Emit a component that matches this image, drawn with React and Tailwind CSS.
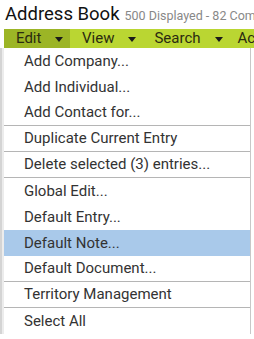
import React from "react";

const items = [
  { label: "Add Company..." },
  { label: "Add Individual..." },
  { label: "Add Contact for...", sep: true },
  { label: "Duplicate Current Entry", sep: true },
  { label: "Delete selected (3) entries...", sep: true },
  { label: "Global Edit..." },
  { label: "Default Entry..." },
  { label: "Default Note...", active: true },
  { label: "Default Document...", sep: true },
  { label: "Territory Management", sep: true },
  { label: "Select All" },
];

function Caret() {
  return (
    <svg width="8" height="5" viewBox="0 0 8 5" className="shrink-0">
      <path d="M0 0h8L4 5z" fill="#1a1a1a" />
    </svg>
  );
}

export default function App() {
  return (
    <div className="w-[254px] h-[339px] overflow-hidden bg-white font-['Roboto',sans-serif] text-[#333]">
      <div className="flex items-baseline whitespace-nowrap pl-[5px] pt-[3px] h-[29px]">
        <span className="shrink-0 text-[18.5px] leading-[23px] text-[#111]">Address Book</span>
        <span className="shrink-0 ml-[5px] text-[12.5px] text-[#888]">500 Displayed - 82 Companies</span>
      </div>
      <div className="ml-[4px] flex h-[19px] items-center whitespace-nowrap bg-[#bad632] text-[15px] text-[#2b2b10]">
        <div className="flex h-full w-[66px] shrink-0 items-center bg-[#9cb526] pl-[12px]">
          <span>Edit</span>
          <span className="ml-[14px] mt-[2px]"><Caret /></span>
        </div>
        <div className="flex h-full shrink-0 items-center pl-[12px]">
          <span>View</span>
          <span className="ml-[14px] mt-[2px]"><Caret /></span>
        </div>
        <div className="flex h-full shrink-0 items-center pl-[18px]">
          <span>Search</span>
          <span className="ml-[14px] mt-[2px]"><Caret /></span>
        </div>
        <div className="flex h-full shrink-0 items-center pl-[15px]">
          <span>Actions</span>
        </div>
      </div>
      <div className="flex">
        <div className="w-[4px] shrink-0 flex">
          <div className="w-[2px] bg-[#d4d4d4]" />
          <div className="w-[2px] bg-[#ececec]" />
        </div>
        <div className="w-[247px] shrink-0 border-r border-[#c8c8c8] bg-white">
          {items.map((it) => (
            <div
              key={it.label}
              className={
                (it.active ? "bg-[#a9c9ea] " : "") +
                (it.sep ? "border-b border-[#b5b5b5] " : "") +
                "h-[26px] flex items-center pl-[20px] text-[15px] whitespace-nowrap"
              }
            >
              {it.label}
            </div>
          ))}
        </div>
      </div>
    </div>
  );
}
